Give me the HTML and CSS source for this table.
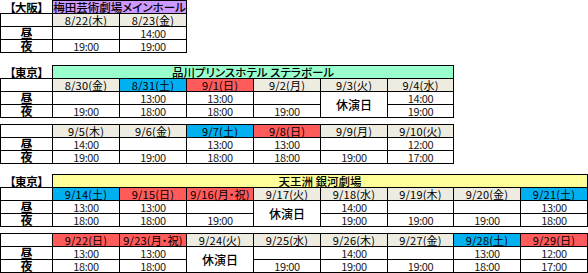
FILE: index.html
```html
<!DOCTYPE html>
<html lang="ja">
<head>
<meta charset="utf-8">
<title>公演スケジュール</title>
<link rel="stylesheet" href="styles.css">
</head>
<body>
<div class="page">

  <table class="sched s-osaka">
    <colgroup><col class="c-lbl"><col class="c-day"><col class="c-day"></colgroup>
    <tr><td class="area">【大阪】</td><td class="venue v-purple" colspan="2">梅田芸術劇場メインホール</td></tr>
    <tr><td></td><td class="d">8/22(木)</td><td class="d">8/23(金)</td></tr>
    <tr><td class="rl">昼</td><td class="t"></td><td class="t">14:00</td></tr>
    <tr><td class="rl">夜</td><td class="t">19:00</td><td class="t">19:00</td></tr>
  </table>

  <table class="sched s-tokyo1">
    <colgroup><col class="c-lbl"><col class="c-day"><col class="c-day"><col class="c-day"><col class="c-day"><col class="c-day"><col class="c-day6"></colgroup>
    <tr><td class="area">【東京】</td><td class="venue v-green" colspan="6">品川プリンスホテル ステラボール</td></tr>
    <tr><td></td><td class="d">8/30(金)</td><td class="d sat">8/31(土)</td><td class="d sun">9/1(日)</td><td class="d">9/2(月)</td><td class="d">9/3(火)</td><td class="d">9/4(水)</td></tr>
    <tr><td class="rl">昼</td><td class="t"></td><td class="t">13:00</td><td class="t">13:00</td><td class="t"></td><td class="off" rowspan="2">休演日</td><td class="t">14:00</td></tr>
    <tr><td class="rl">夜</td><td class="t">19:00</td><td class="t">18:00</td><td class="t">18:00</td><td class="t">19:00</td><td class="t">19:00</td></tr>
  </table>

  <table class="sched s-tokyo1b">
    <colgroup><col class="c-lbl"><col class="c-day"><col class="c-day"><col class="c-day"><col class="c-day"><col class="c-day"><col class="c-day6"></colgroup>
    <tr><td></td><td class="d">9/5(木)</td><td class="d">9/6(金)</td><td class="d sat">9/7(土)</td><td class="d sun">9/8(日)</td><td class="d">9/9(月)</td><td class="d">9/10(火)</td></tr>
    <tr><td class="rl">昼</td><td class="t">14:00</td><td class="t"></td><td class="t">13:00</td><td class="t">13:00</td><td class="t"></td><td class="t">12:00</td></tr>
    <tr><td class="rl">夜</td><td class="t">19:00</td><td class="t">19:00</td><td class="t">18:00</td><td class="t">18:00</td><td class="t">19:00</td><td class="t">17:00</td></tr>
  </table>

  <table class="sched s-tokyo2">
    <colgroup><col class="c-lbl"><col class="c-day"><col class="c-day"><col class="c-day"><col class="c-day"><col class="c-day"><col class="c-day6"><col class="c-day"><col class="c-day"></colgroup>
    <tr><td class="area">【東京】</td><td class="venue v-yellow" colspan="8">天王洲 銀河劇場</td></tr>
    <tr><td></td><td class="d sat">9/14(土)</td><td class="d sun">9/15(日)</td><td class="d sun">9/16(月・祝)</td><td class="d">9/17(火)</td><td class="d">9/18(水)</td><td class="d">9/19(木)</td><td class="d">9/20(金)</td><td class="d sat">9/21(土)</td></tr>
    <tr><td class="rl">昼</td><td class="t">13:00</td><td class="t">13:00</td><td class="t"></td><td class="off" rowspan="2">休演日</td><td class="t">14:00</td><td class="t"></td><td class="t"></td><td class="t">13:00</td></tr>
    <tr><td class="rl">夜</td><td class="t">18:00</td><td class="t">18:00</td><td class="t">19:00</td><td class="t">19:00</td><td class="t">19:00</td><td class="t">19:00</td><td class="t">18:00</td></tr>
  </table>

  <table class="sched s-tokyo2b">
    <colgroup><col class="c-lbl"><col class="c-day"><col class="c-day"><col class="c-day"><col class="c-day"><col class="c-day"><col class="c-day6"><col class="c-day"><col class="c-day"></colgroup>
    <tr><td></td><td class="d sun">9/22(日)</td><td class="d sun">9/23(月・祝)</td><td class="d">9/24(火)</td><td class="d">9/25(水)</td><td class="d">9/26(木)</td><td class="d">9/27(金)</td><td class="d sat">9/28(土)</td><td class="d sun">9/29(日)</td></tr>
    <tr><td class="rl">昼</td><td class="t">13:00</td><td class="t">13:00</td><td class="off" rowspan="2">休演日</td><td class="t"></td><td class="t">14:00</td><td class="t"></td><td class="t">13:00</td><td class="t">12:00</td></tr>
    <tr><td class="rl">夜</td><td class="t">18:00</td><td class="t">18:00</td><td class="t">19:00</td><td class="t">19:00</td><td class="t">19:00</td><td class="t">18:00</td><td class="t">17:00</td></tr>
  </table>

</div>
</body>
</html>
```

FILE: styles.css
```css
html, body {
  margin: 0;
  padding: 0;
  background: #ffffff;
}

.page {
  display: flex;
  flex-direction: column;
  align-items: flex-start;
  font-family: "Noto Sans CJK JP", "Noto Sans", sans-serif;
  font-feature-settings: "palt";
  color: #000;
}

.sched {
  border-collapse: collapse;
  table-layout: fixed;
}

.s-tokyo1 { margin-top: 12px; }
.s-tokyo1b { margin-top: 6px; }
.s-tokyo2 { margin-top: 10px; }
.s-tokyo2b { margin-top: 6px; }

.c-lbl { width: 52px; }
.c-day { width: 67px; }
.c-day6 { width: 66px; }

.sched td {
  border: 1px solid #000;
  height: 12px;
  padding: 0;
  line-height: 12px;
  font-size: 11px;
  text-align: center;
  white-space: nowrap;
  vertical-align: middle;
}

.sched td.area {
  border: none;
  font-weight: bold;
  font-size: 11.5px;
  letter-spacing: -0.3px;
}

.sched td.venue {
  font-size: 11.5px;
  font-weight: 500;
}

.v-purple { background: #cc99ff; }
.v-green { background: #99ffcc; }
.v-yellow { background: #ffff99; }

.sched td.d {
  background: #eeece1;
  font-size: 11px;
  letter-spacing: 0.2px;
}

.sched td.sat { background: #00b0f0; }
.sched td.sun { background: #ff5b5b; }

.sched td.rl {
  font-weight: bold;
  font-size: 12px;
}

.sched td.t {
  font-size: 11px;
  color: #1a1a1a;
  letter-spacing: -0.4px;
}

.sched td.off {
  font-size: 12px;
  font-weight: 500;
}
```
